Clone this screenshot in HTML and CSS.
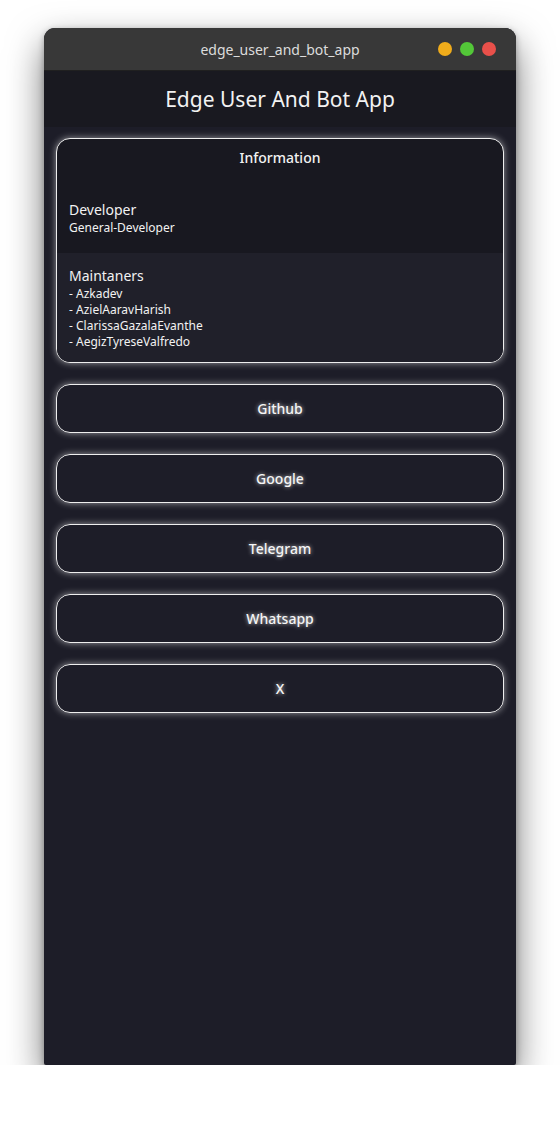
FILE: index.html
```html
<!DOCTYPE html>
<html>
<head>
<meta charset="utf-8">
<link rel="stylesheet" href="styles.css">
</head>
<body>
<div class="window">
  <div class="titlebar">
    <span class="title">edge_user_and_bot_app</span>
    <div class="dots">
      <span class="dot dot-min"></span>
      <span class="dot dot-max"></span>
      <span class="dot dot-close"></span>
    </div>
  </div>
  <div class="appbar">Edge User And Bot App</div>
  <div class="content">
    <div class="card">
      <div class="card-head">Information</div>
      <div class="section section-dev">
        <div class="sec-title">Developer</div>
        <div class="sec-line">General-Developer</div>
      </div>
      <div class="section section-main">
        <div class="sec-title main-title">Maintaners</div>
        <div class="sec-line">- Azkadev</div>
        <div class="sec-line">- AzielAaravHarish</div>
        <div class="sec-line">- ClarissaGazalaEvanthe</div>
        <div class="sec-line">- AegizTyreseValfredo</div>
      </div>
    </div>
    <div class="btn">Github</div>
    <div class="btn">Google</div>
    <div class="btn">Telegram</div>
    <div class="btn">Whatsapp</div>
    <div class="btn">X</div>
  </div>
</div>
</body>
</html>
```
FILE: styles.css
```css
html, body {
  margin: 0;
  padding: 0;
  background: #ffffff;
}
body {
  font-family: "Noto Sans", "Open Sans", sans-serif;
  padding: 28px 44px 0 44px;
}
.window {
  width: 472px;
  height: 1037px;
  background: #1d1d28;
  border-radius: 11px 11px 2px 2px;
  overflow: hidden;
  box-shadow: 0 16px 36px rgba(0, 0, 0, 0.55), 0 2px 6px rgba(0, 0, 0, 0.3);
  display: flex;
  flex-direction: column;
}
.titlebar {
  height: 42px;
  background: #383838;
  border-bottom: 1px solid #202020;
  display: flex;
  align-items: center;
  justify-content: center;
  position: relative;
  flex-shrink: 0;
}
.title {
  color: #dcdcdc;
  font-size: 14px;
}
.dots {
  position: absolute;
  right: 20px;
  top: 14px;
  display: flex;
  gap: 8px;
}
.dot {
  width: 14px;
  height: 14px;
  border-radius: 50%;
  display: block;
}
.dot-min { background: #f0ac1b; }
.dot-max { background: #53c738; }
.dot-close { background: #e9504a; }
.appbar {
  height: 56px;
  background: #191920;
  color: #f2f2f2;
  font-size: 21px;
  display: flex;
  align-items: center;
  justify-content: center;
  flex-shrink: 0;
}
.content {
  padding: 11px 12px;
  display: flex;
  flex-direction: column;
  gap: 21px;
}
.card {
  border: 1px solid #eeeeee;
  border-radius: 14px;
  overflow: hidden;
  box-shadow: 0 0 7px rgba(255, 255, 255, 0.55);
  background: #181820;
}
.card-head {
  height: 37px;
  display: flex;
  align-items: center;
  justify-content: center;
  color: #f2f2f2;
  font-size: 14px;
  font-weight: 500;
}
.section {
  padding: 0 12px;
  color: #f2f2f2;
}
.section-dev {
  padding-top: 24px;
  padding-bottom: 17px;
  background: #181820;
}
.section-main {
  padding-top: 12px;
  padding-bottom: 12px;
  background: #20202a;
}
.sec-title {
  font-size: 14px;
  line-height: 20px;
}
.main-title {
  line-height: 21px;
}
.sec-line {
  font-size: 12px;
  line-height: 16px;
}
.btn {
  height: 47px;
  border: 1px solid #eeeeee;
  border-radius: 14px;
  box-shadow: 0 0 7px rgba(255, 255, 255, 0.55);
  display: flex;
  align-items: center;
  justify-content: center;
  color: #f5f5f5;
  font-size: 14px;
  font-weight: 500;
  text-shadow: 0 0 4px rgba(255, 255, 255, 0.75);
}
```
